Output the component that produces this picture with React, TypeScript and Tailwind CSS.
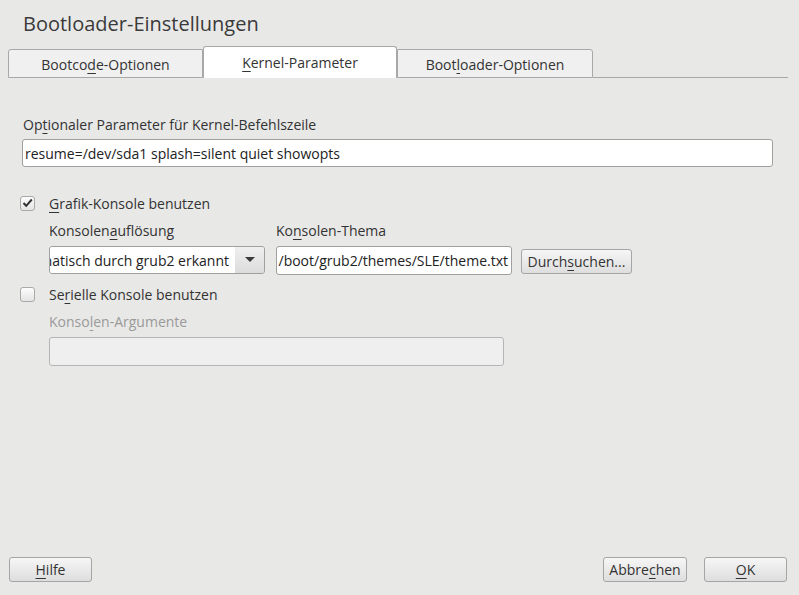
import React from "react";

const font = { fontFamily: '"Open Sans", "Liberation Sans", sans-serif' };

const Mn = ({ children }: { children: React.ReactNode }) => (
  <span className="underline underline-offset-[3px] decoration-1">{children}</span>
);

const CheckBox = ({ checked }: { checked?: boolean }) => (
  <div className="w-[15px] h-[15px] rounded-[3px] border border-[#a9a9a9] bg-gradient-to-b from-[#fdfdfd] to-[#e4e4e4] flex items-center justify-center">
    {checked && (
      <svg width="11" height="10" viewBox="0 0 11 10">
        <path d="M1.5 5 L4.2 7.8 L9.8 1.5" fill="none" stroke="#333" strokeWidth="2" />
      </svg>
    )}
  </div>
);

const Button = ({ children, className = "" }: { children: React.ReactNode; className?: string }) => (
  <div
    className={`h-[25px] rounded-[3px] border border-[#a5a5a5] bg-gradient-to-b from-[#f6f6f6] to-[#dedede] flex items-center justify-center text-[14px] text-[#333] ${className}`}
  >
    {children}
  </div>
);

export default function App() {
  return (
    <div style={font} className="w-[799px] h-[595px] bg-[#e8e8e7] text-[#333] flex flex-col overflow-hidden">
      {/* Title */}
      <div className="pl-[23px] pt-[10px] h-[46px] text-[20px] leading-[28px] text-[#3a3a3a]">
        Bootloader-Einstellungen
      </div>

      {/* Tabs */}
      <div className="flex items-end ml-[8px] mr-[11px] h-[32px] text-[14px]">
        <div className="w-[195px] h-[29px] bg-[#f0f0f0] border border-[#a8a8a8] rounded-tl-[3px] flex items-center justify-center pt-px">
          Bootco<Mn>d</Mn>e-Optionen
        </div>
        <div className="w-[194px] h-[32px] bg-white border border-b-0 border-[#a8a8a8] rounded-t-[3px] flex items-center justify-center pb-[1px]">
          <Mn>K</Mn>ernel-Parameter
        </div>
        <div className="w-[196px] h-[29px] bg-[#f0f0f0] border border-[#a8a8a8] rounded-tr-[3px] flex items-center justify-center pt-px">
          Boot<Mn>l</Mn>oader-Optionen
        </div>
        <div className="flex-1 border-b border-[#a8a8a8]" />
      </div>

      {/* Content */}
      <div className="flex flex-col pl-[22px] pr-[26px] pt-[37px] text-[14px]">
        <div className="h-[20px] leading-[20px] pl-px">
          Op<Mn>t</Mn>ionaler Parameter für Kernel-Befehlszeile
        </div>
        <div className="mt-[4px] h-[28px] bg-white border border-[#a0a0a0] rounded-[3px] flex items-center px-[2px] text-[14px] text-[#222]">
          resume=/dev/sda1 splash=silent quiet showopts
        </div>

        <div className="mt-[26px] flex items-center h-[20px] -ml-[2px]">
          <CheckBox checked />
          <span className="ml-[14px]">
            <Mn>G</Mn>rafik-Konsole benutzen
          </span>
        </div>

        <div className="ml-[27px] mt-[8px] flex gap-[11px]">
          <div className="flex flex-col w-[216px]">
            <div className="h-[20px] leading-[20px]">
              Konsolen<Mn>a</Mn>uflösung
            </div>
            <div className="mt-[5px] h-[28px] flex border border-[#a0a0a0] rounded-[3px] overflow-hidden">
              <div className="flex-1 bg-white flex justify-end items-center overflow-hidden whitespace-nowrap pr-[6px] text-[#222]">
                Automatisch durch grub2 erkannt
              </div>
              <div className="w-[29px] bg-gradient-to-b from-[#efefef] to-[#dcdcdc] flex items-center justify-center">
                <svg width="10" height="6" viewBox="0 0 10 6">
                  <path d="M0 0 L10 0 L5 5 Z" fill="#3a3a3a" />
                </svg>
              </div>
            </div>
          </div>
          <div className="flex flex-col w-[236px]">
            <div className="h-[20px] leading-[20px]">
              Ko<Mn>n</Mn>solen-Thema
            </div>
            <div className="mt-[5px] h-[29px] bg-white border border-[#a0a0a0] rounded-[3px] flex items-center justify-end overflow-hidden whitespace-nowrap pr-[3px] text-[#222]">
              /boot/grub2/themes/SLE/theme.txt
            </div>
          </div>
          <div className="flex items-end pb-[1px] -ml-[2px]">
            <Button className="w-[111px]">
              Durch<Mn>s</Mn>uchen...
            </Button>
          </div>
        </div>

        <div className="mt-[9px] flex items-center h-[20px] -ml-[2px]">
          <CheckBox />
          <span className="ml-[14px]">
            Se<Mn>r</Mn>ielle Konsole benutzen
          </span>
        </div>

        <div className="ml-[27px] mt-[8px] h-[20px] leading-[20px] text-[#9a9a9a]">
          Konso<Mn>l</Mn>en-Argumente
        </div>
        <div className="ml-[27px] mt-[5px] w-[455px] h-[29px] bg-[#efefef] border border-[#b5b5b5] rounded-[3px]" />
      </div>

      <div className="flex-1" />

      {/* Bottom buttons */}
      <div className="flex items-center pl-[9px] pr-[12px] pb-[13px]">
        <Button className="w-[83px]">
          <Mn>H</Mn>ilfe
        </Button>
        <div className="flex-1" />
        <Button className="w-[84px]">
          Abbre<Mn>c</Mn>hen
        </Button>
        <Button className="w-[83px] ml-[17px]">
          <Mn>O</Mn>K
        </Button>
      </div>
    </div>
  );
}
